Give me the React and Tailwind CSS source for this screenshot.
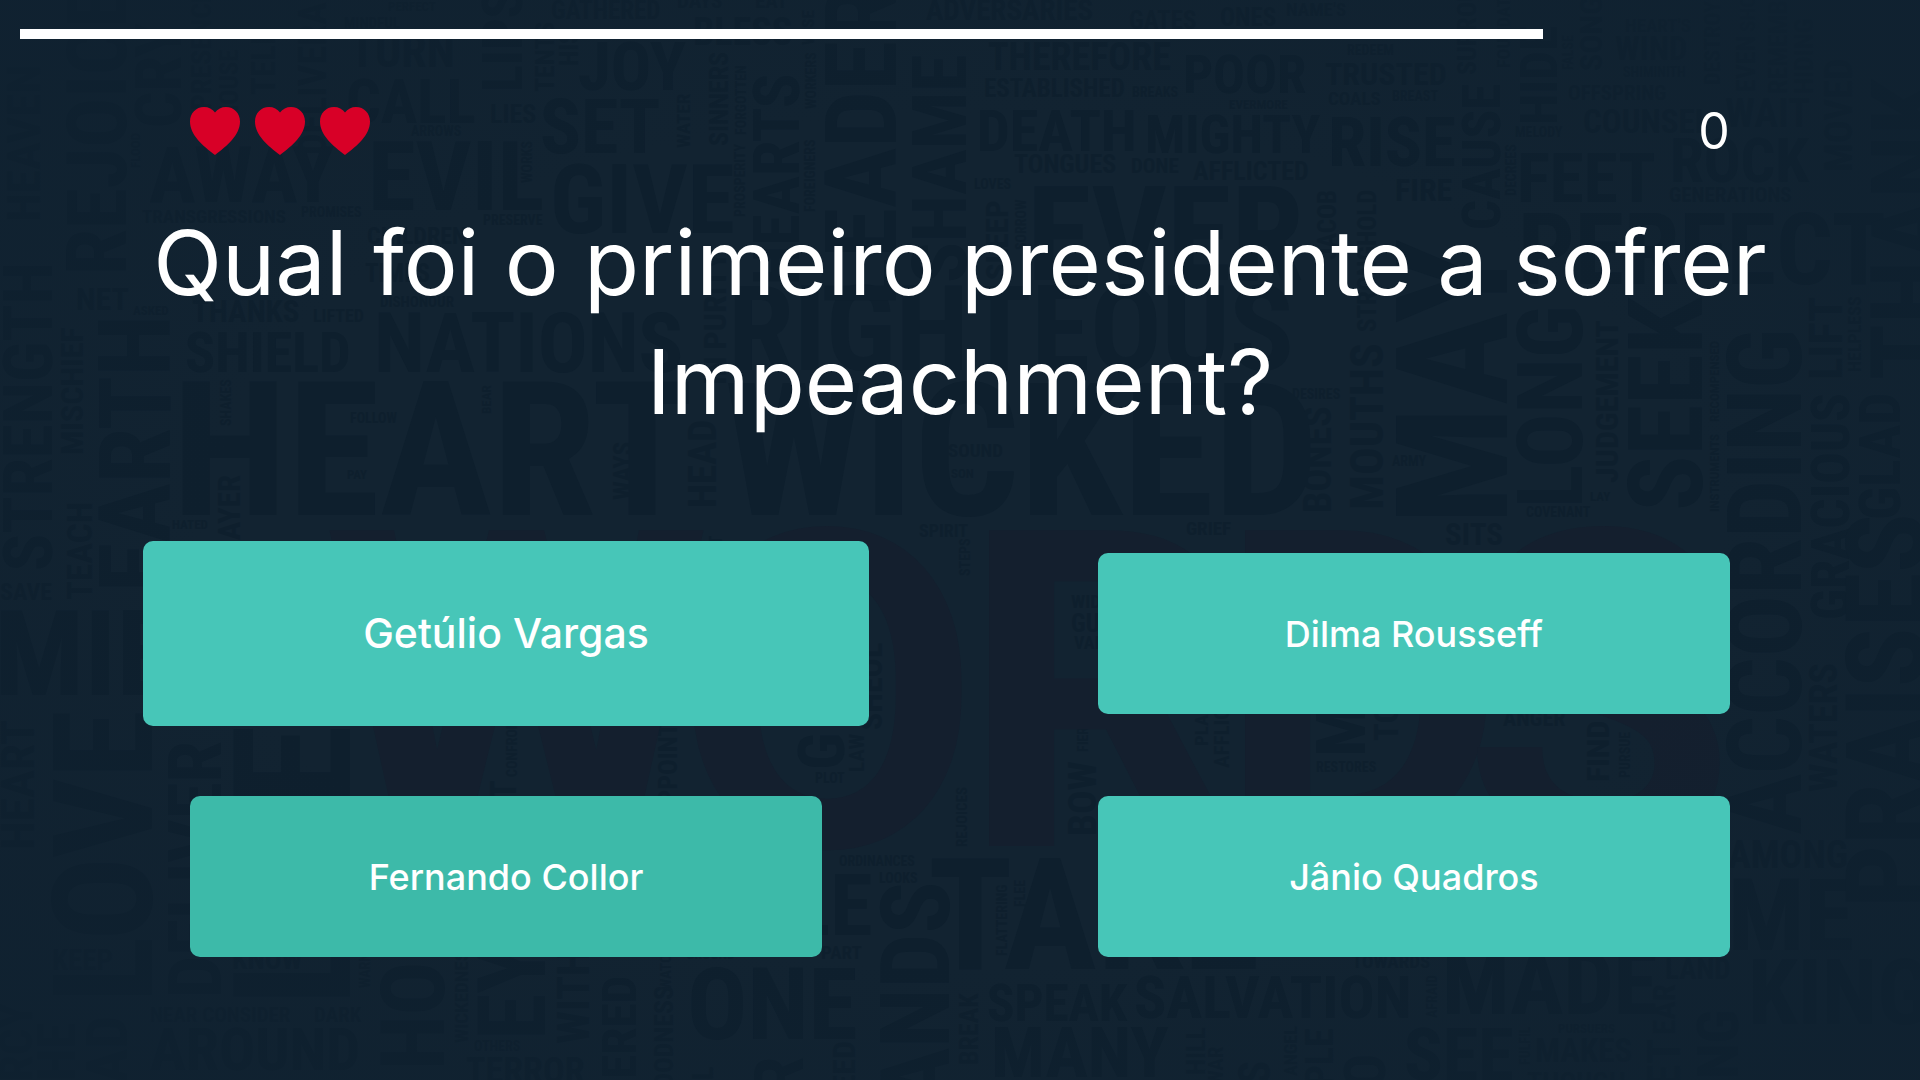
import React from "react";

const DARK = "#0e1f2d";

// [text, left, baseline, cap height]
const ACROSS = [
  ["PERFECT", 388, 11, 9], ["MINDFUL", 344, 28, 11], ["GATHERED", 551, 19, 18], ["DAYS", 677, 8, 15], ["EAT", 755, 8, 15],
  ["BLESS", 693, 45, 27], ["ADVERSARIES", 926, 20, 21], ["GATES", 1129, 29, 18], ["ONES", 1220, 26, 18], ["NAME'S", 1286, 16, 14],
  ["TURN", 350, 67, 33], ["CALL", 346, 123, 44], ["LIES", 490, 123, 19], ["ARROWS", 411, 136, 10], ["AWAY", 149, 202, 56],
  ["EVIL", 368, 210, 70], ["SET", 540, 153, 55], ["GIVE", 550, 233, 69], ["JOY", 578, 90, 48],
  ["TRANSGRESSIONS", 142, 223, 14], ["PROMISES", 301, 217, 10], ["PRESERVE", 483, 225, 10], ["CHILDREN", 367, 244, 17],
  ["TIMES", 365, 282, 18], ["DISHONOUR", 380, 307, 11], ["THANKS", 192, 322, 22], ["LIFTED", 313, 322, 13], ["ASKED", 133, 315, 9],
  ["NET", 76, 310, 23], ["SHIELD", 185, 372, 40], ["NATIONS", 374, 372, 60], ["HEART", 172, 515, 135], ["WICKED", 724, 515, 134],
  ["RIGHTEOUS", 728, 370, 86], ["FOLLOW", 350, 423, 10], ["PAY", 347, 479, 9], ["HATED", 172, 529, 9],
  ["SOUND", 948, 457, 14], ["SON", 951, 478, 9], ["SPIRIT", 919, 537, 13], ["GRIEF", 1186, 535, 14],
  ["THEREFORE", 988, 70, 27], ["ESTABLISHED", 984, 97, 18], ["BREAKS", 1132, 97, 10], ["POOR", 1183, 93, 38], ["EVERMORE", 1229, 109, 9],
  ["DEATH", 977, 151, 42], ["MIGHTY", 1145, 153, 38], ["RISE", 1328, 166, 50], ["TRUSTED", 1325, 85, 23], ["COALS", 1328, 105, 14],
  ["BREAST", 1392, 101, 10], ["REDEEM", 1347, 55, 10], ["TONGUES", 1014, 173, 19], ["DONE", 1131, 173, 15], ["AFFLICTED", 1193, 180, 19],
  ["LOVES", 974, 189, 10], ["EVER", 1027, 280, 94], ["FIRE", 1395, 201, 23], ["FEET", 1517, 202, 50], ["ROCK", 1670, 182, 44],
  ["GENERATIONS", 1669, 202, 15], ["COUNSEL", 1583, 133, 24], ["WAIT", 1725, 127, 29], ["OFFSPRING", 1568, 100, 15],
  ["MELODY", 1515, 137, 10], ["WIND", 1615, 60, 24], ["HEART'S", 1625, 32, 14], ["SHIMINITH", 1623, 77, 10], ["PERFECT", 1518, 284, 72],
  ["DESIRES", 1292, 399, 10], ["ARMY", 1392, 466, 10], ["LAY", 1590, 501, 9], ["COVENANT", 1526, 517, 10], ["SITS", 1445, 545, 22],
  ["ANGER", 1503, 726, 16], ["RESTORES", 1316, 772, 10], ["AMONG", 1728, 868, 27], ["ME", 1728, 950, 73], ["LAND", 1665, 979, 21],
  ["TOWARDS", 1352, 968, 14], ["MADE", 1442, 1014, 64], ["KING", 1748, 1024, 65], ["MAKES", 1535, 1062, 24], ["SEE", 1404, 1080, 52],
  ["THOUGH", 1527, 1092, 20], ["PURSUERS", 1558, 1033, 9], ["SALVATION", 1134, 1018, 43], ["SPEAK", 987, 1021, 37], ["MANY", 991, 1077, 51],
  ["TAKE", 928, 969, 112], ["ONE", 687, 1039, 72], ["ORDINANCES", 839, 866, 10], ["LOOKS", 879, 883, 10], ["PART", 821, 959, 14],
  ["LE", 789, 935, 62], ["GROUND", 686, 959, 10], ["PLOT", 815, 783, 10], ["WIDE", 1071, 608, 14], ["GUIDE", 1071, 632, 18], ["VAIN", 1074, 649, 13],
  ["SAVE", 0, 600, 17], ["MIES", -6, 695, 86], ["KEEP", 52, 970, 21], ["KNOW", 232, 969, 20], ["NEAR CONSIDER", 150, 1022, 15],
  ["DARK", 314, 1022, 15], ["AROUND", 150, 1070, 43], ["OTHERS", 474, 1051, 10], ["TERROR", 466, 1083, 26],
];

// [text, baseline x, lower end y, cap height]
const UPWARD = [
  ["HEAVEN", 40, 222, 34], ["REJOICE", 126, 275, 60], ["STRENGTH", 52, 571, 50], ["MISCHIEF", 83, 455, 23], ["EARTH", 170, 592, 72],
  ["CRY", 181, 128, 46], ["PRESENCE", 211, 110, 20], ["HOUSE", 238, 120, 18], ["TELL", 275, 95, 24], ["DELIVERANCE", 326, 155, 27],
  ["LIPS", 522, 92, 40], ["TENTS", 554, 92, 19], ["HIS", 578, 66, 18], ["WORKS", 532, 183, 10], ["FLOOD", 140, 168, 9],
  ["SHAKES", 231, 426, 10], ["BEAR", 491, 414, 9], ["PRAYER", 240, 575, 22], ["WAYS", 632, 500, 18], ["TEACH", 92, 600, 25],
  ["LEADER", 896, 306, 73], ["HEARTS", 799, 285, 46], ["SHAME", 966, 283, 55], ["SINNERS", 728, 146, 19], ["WATER", 690, 148, 14],
  ["FORGOTTEN", 746, 135, 10], ["WORKERS", 816, 109, 10], ["FOREIGNERS", 815, 212, 10], ["PROSPERITY", 745, 217, 10], ["WISE", 814, 45, 12],
  ["SLEEP", 1008, 280, 22], ["SORROW", 1026, 250, 10], ["IN PURITY", 726, 385, 23], ["HEAD", 716, 508, 28], ["HIGHEST", 722, 605, 14],
  ["BRING", 1244, 478, 15], ["HIDE", 1557, 125, 37], ["CAUSE", 1500, 230, 38], ["SONG", 1602, 71, 23], ["SURROUND", 1476, 75, 19],
  ["FOUNDATION", 1510, 68, 13], ["JACOB", 1336, 260, 18], ["STRONGHOLD", 1376, 332, 18], ["DECREES", 1516, 196, 10], ["FALSE", 1573, 70, 10],
  ["MAY", 1507, 525, 112], ["LONG", 1582, 508, 65], ["SEEK", 1702, 511, 74], ["JUDGEMENT", 1618, 483, 23], ["BONES", 1331, 513, 27],
  ["MOUTHS", 1383, 510, 33], ["ACCORDING", 1801, 835, 74], ["GRACIOUS", 1849, 620, 38], ["LIFT", 1842, 380, 34], ["HELPLESS", 1861, 372, 13],
  ["GLAD", 1900, 520, 41], ["THANK", 1945, 380, 74], ["RECOMPENSED", 1719, 422, 9], ["INSTRUMENTS", 1719, 512, 9],
  ["EVEN", 1755, 92, 19], ["SHOW", 1755, 32, 15], ["REMEMBER", 1787, 94, 19], ["HIDING", 1813, 94, 19], ["DESTROYED", 1720, 85, 16], ["MOVED", 1852, 172, 27],
  ["PRAISES", 1925, 908, 80], ["WATERS", 1837, 792, 27], ["EAR", 1675, 1035, 22], ["LONG", 1738, 1140, 42], ["LET", 1680, 1110, 34],
  ["BOW", 1096, 836, 28], ["FIERY", 1088, 752, 10], ["FIND", 1609, 782, 23], ["PURSUE", 1630, 778, 10], ["MY", 1365, 757, 50], ["TO", 1398, 741, 24],
  ["PLANS", 1208, 746, 14], ["AFFLICTION", 1229, 768, 15], ["HANDS", 949, 1166, 70], ["BREAK", 978, 1065, 19], ["FLATTERING", 1007, 956, 10],
  ["FLEE", 1025, 907, 10], ["REJOICES", 967, 847, 11], ["LAW", 864, 772, 15], ["G", 844, 770, 46], ["APPOINTED", 677, 820, 19],
  ["SHEOL", 882, 730, 23], ["STEPS", 970, 576, 10], ["GOODNESS", 673, 1104, 19], ["WATCH", 671, 990, 11], ["R", 803, 1095, 50],
  ["NEED", 855, 1110, 23], ["SOUL", 713, 1130, 21], ["LOVE", 152, 1003, 100], ["DELIVER", 221, 998, 54], ["LIFE", 350, 1006, 118],
  ["HO", 444, 1070, 64], ["EY", 545, 1040, 68], ["WITH", 589, 1044, 32], ["OFFERED", 636, 1155, 35], ["WICKEDNESS", 468, 1043, 14],
  ["CONFRONT", 517, 777, 10], ["T", 516, 800, 26], ["WARN", 370, 988, 10], ["ROAD", 127, 1150, 42], ["THE", 75, 1110, 38], ["MERCY", 32, 1140, 34],
  ["HEART", 34, 850, 34], ["PEOPLE", 1333, 1150, 27], ["SO", 1385, 1120, 42], ["ANGEL", 1297, 1076, 13],
  ["AFRAID", 1437, 1018, 10], ["HILL", 1205, 1075, 19], ["WAR", 1223, 1086, 15], ["YES", 1270, 1130, 32], ["FULFIL", 1530, 1065, 10],
];

// [letter, left]
const GIANT = [["W", 322], ["O", 674], ["R", 961], ["D", 1217], ["S", 1462]];

function WordCloud() {
  return (
    <svg
      aria-hidden="true"
      className="pointer-events-none absolute inset-0 h-full w-full select-none font-['Liberation_Sans_Narrow','Roboto_Condensed',Roboto,sans-serif] font-bold"
      viewBox="0 0 1920 1080"
      preserveAspectRatio="xMidYMid slice"
    >
      <defs>
        <radialGradient id="shade" cx="50%" cy="50%" r="65%">
          <stop offset="0.6" stopColor="#0f2130" stopOpacity="0" />
          <stop offset="1" stopColor="#0f2130" stopOpacity="0.75" />
        </radialGradient>
      </defs>
      <g fill={DARK}>
        {ACROSS.map(([text, x, y, cap], i) => (
          <text key={i} x={x} y={y} fontSize={Math.round(cap / 0.72)}>{text}</text>
        ))}
        {UPWARD.map(([text, x, y, cap], i) => (
          <text key={i} transform={`translate(${x} ${y}) rotate(-90)`} fontSize={Math.round(cap / 0.72)}>{text}</text>
        ))}
      </g>
      <g fill="#141f2e" className="font-[Roboto,sans-serif]">
        {GIANT.map(([letter, x]) => (
          <text key={letter} x={x} y="846" fontSize="444">{letter}</text>
        ))}
      </g>
      <rect width="1920" height="1080" fill="url(#shade)" />
    </svg>
  );
}

function Heart() {
  return (
    <svg viewBox="0 0 50 48" className="h-12 w-[50px]" fill="#d80027" aria-hidden="true">
      <path d="M25 5.500C22.500 2 18.500 0 14 0C6 0 0 6.200 0 14.500C0 28 13 39 25 48C37 39 50 28 50 14.500C50 6.200 44 0 36 0C31.500 0 27.500 2 25 5.500Z" />
    </svg>
  );
}

const ANSWERS = [
  { text: "Getúlio Vargas", style: "-mx-[47px] -my-3 bg-[#47c6b8] text-[41px]" },
  { text: "Dilma Rousseff", style: "bg-[#47c6b8] text-[36px]" },
  { text: "Fernando Collor", style: "bg-[#3dbaa9] text-[36px]" },
  { text: "Jânio Quadros", style: "bg-[#47c6b8] text-[36px]" },
];

export default function App() {
  return (
    <main className="relative min-h-screen overflow-hidden bg-[#122331] font-[Inter,sans-serif] text-white">
      <WordCloud />
      <div className="relative pb-10">
        <div className="px-5 pt-[29px]">
          <div role="progressbar" aria-label="Tempo restante" aria-valuenow={81} className="h-[10px] w-[81%] bg-white" />
        </div>
        <div className="mx-auto mt-[62px] flex w-[80.2%] items-center justify-between">
          <div className="flex gap-[15px]" role="img" aria-label="3 vidas">
            <Heart />
            <Heart />
            <Heart />
          </div>
          <span className="text-[50px] leading-[60px]">0</span>
        </div>
        <h1 className="mx-auto mt-[42px] max-w-[1660px] text-center text-[90px] leading-[119px]">
          Qual foi o primeiro presidente a sofrer Impeachment?
        </h1>
        <div className="mx-auto mt-[112px] grid w-[80.2%] grid-cols-2 gap-x-[276px] gap-y-[82px]">
          {ANSWERS.map((answer) => (
            <button key={answer.text} type="button" className={`min-h-[161px] rounded-[10px] font-medium ${answer.style}`}>
              {answer.text}
            </button>
          ))}
        </div>
      </div>
    </main>
  );
}
